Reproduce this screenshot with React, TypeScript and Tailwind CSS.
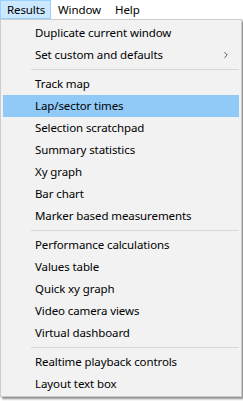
import { ChevronRight } from 'lucide-react';

type Entry = { label: string; sub?: boolean; active?: boolean } | 'sep';

const entries: Entry[] = [
  { label: 'Duplicate current window' },
  { label: 'Set custom and defaults', sub: true },
  'sep',
  { label: 'Track map' },
  { label: 'Lap/sector times', active: true },
  { label: 'Selection scratchpad' },
  { label: 'Summary statistics' },
  { label: 'Xy graph' },
  { label: 'Bar chart' },
  { label: 'Marker based measurements' },
  'sep',
  { label: 'Performance calculations' },
  { label: 'Values table' },
  { label: 'Quick xy graph' },
  { label: 'Video camera views' },
  { label: 'Virtual dashboard' },
  'sep',
  { label: 'Realtime playback controls' },
  { label: 'Layout text box' },
];

export default function App() {
  return (
    <div className="w-[243px] h-[401px] bg-white text-[11.5px] tracking-[-0.1px] text-black font-['Noto_Sans',sans-serif] overflow-hidden">
      {/* menu bar */}
      <div className="flex h-[19px] items-stretch">
        <div className="w-[51px] pl-[6px] h-[19px] flex items-center bg-[#cce8ff] border border-[#99d1ff]">Results</div>
        <div className="ml-[7px] flex items-center">Window</div>
        <div className="ml-[14px] flex items-center">Help</div>
      </div>

      {/* dropdown */}
      <div className="w-[242px] bg-[#f2f2f2] border border-[#cccccc] pt-[2px] pb-[1px] px-[2px] shadow-[2px_2px_2px_rgba(0,0,0,0.45)]">
        {entries.map((e, i) =>
          e === 'sep' ? (
            <div key={i} className="h-[7px] pl-[28px] flex items-center">
              <div className="h-px w-full bg-[#d7d7d7]" />
            </div>
          ) : (
            <div
              key={i}
              className={
                'h-[22px] pl-[32px] pr-[8px] flex items-center justify-between ' +
                (e.active ? 'bg-[#91c9f7]' : '')
              }
            >
              <span>{e.label}</span>
              {e.sub && <ChevronRight className="w-[10px] h-[10px] text-[#333]" strokeWidth={2} />}
            </div>
          )
        )}
      </div>
    </div>
  );
}
